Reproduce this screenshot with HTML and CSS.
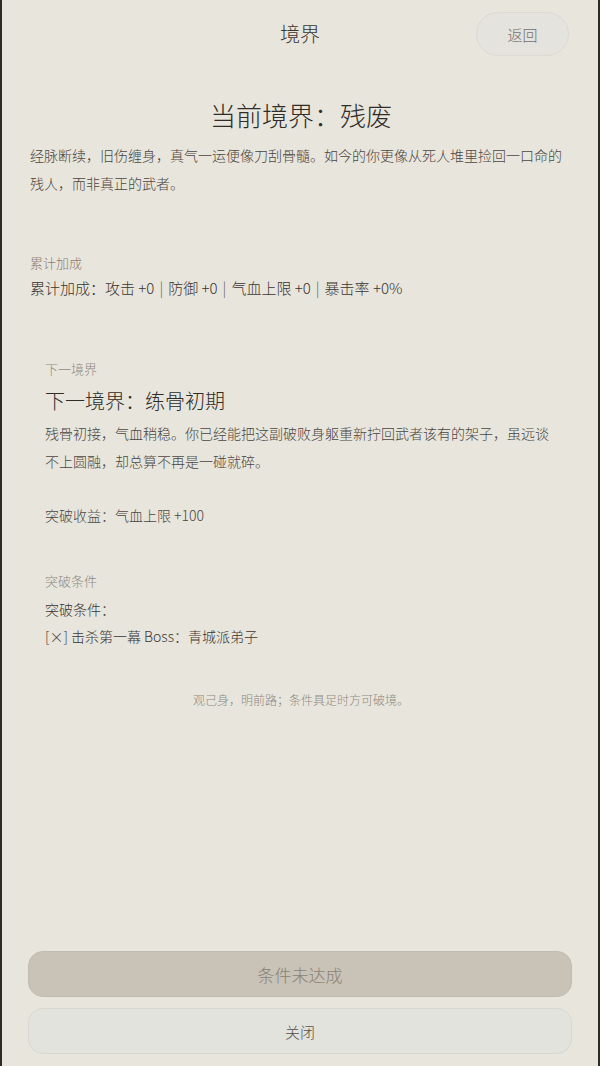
FILE: index.html
```html
<!DOCTYPE html>
<html lang="zh">
<head>
<meta charset="utf-8">
<title>境界</title>
<link rel="stylesheet" href="styles.css">
</head>
<body>
<div class="app">
  <header class="topbar">
    <div></div>
    <h1 class="page-title">境界</h1>
    <div class="topbar-right"><button class="back-btn">返回</button></div>
  </header>

  <main class="content">
    <h2 class="realm-title">当前境界：残废</h2>
    <p class="desc">经脉断续，旧伤缠身，真气一运便像刀刮骨髓。如今的你更像从死人堆里捡回一口命的残人，而非真正的武者。</p>

    <section class="bonus">
      <div class="label label-brown">累计加成</div>
      <div class="bonus-line">累计加成：攻击 +0<span class="sep">|</span>防御 +0<span class="sep">|</span>气血上限 +0<span class="sep">|</span>暴击率 +0%</div>
    </section>

    <section class="next">
      <div class="label">下一境界</div>
      <h3 class="next-title">下一境界：练骨初期</h3>
      <p class="desc">残骨初接，气血稍稳。你已经能把这副破败身躯重新拧回武者该有的架子，虽远谈不上圆融，却总算不再是一碰就碎。</p>
      <p class="benefit">突破收益：气血上限 +100</p>

      <div class="label cond-label">突破条件</div>
      <p class="cond">突破条件：</p>
      <p class="cond">[×] 击杀第一幕 Boss：青城派弟子</p>
    </section>

    <p class="note">观己身，明前路；条件具足时方可破境。</p>
  </main>

  <footer class="actions">
    <button class="btn btn-disabled">条件未达成</button>
    <button class="btn btn-close">关闭</button>
  </footer>
</div>
</body>
</html>
```

FILE: styles.css
```css
* { box-sizing: border-box; }
html, body {
  margin: 0;
  padding: 0;
  background: #2e2b26;
}
body {
  font-family: "Noto Sans CJK SC", "Noto Sans", sans-serif;
  font-weight: 300;
  color: #3a3631;
}
.app {
  margin: 0 2px;
  height: 1066px;
  background: #e8e5dc;
  display: flex;
  flex-direction: column;
}
.topbar {
  display: grid;
  grid-template-columns: 1fr auto 1fr;
  align-items: center;
  padding: 12px 29px 0 29px;
  height: 56px;
}
.page-title {
  margin: 0;
  font-size: 20px;
  font-weight: 300;
  line-height: 44px;
  color: #3a3631;
}
.topbar-right {
  display: flex;
  justify-content: flex-end;
}
.back-btn {
  width: 93px;
  height: 44px;
  border-radius: 22px;
  border: 1px solid #dcdad3;
  background: #e4e3dd;
  color: #75716b;
  font-family: inherit;
  font-weight: 300;
  font-size: 15px;
  padding: 0;
}
.content {
  padding: 0 26px 0 28px;
}
.realm-title {
  margin: 41px 0 0;
  text-align: center;
  font-size: 26px;
  font-weight: 300;
  line-height: 36px;
  color: #302d29;
}
.desc {
  margin: 8px 0 0;
  font-size: 14px;
  line-height: 28px;
  color: #4a4641;
}
.label {
  font-size: 13px;
  line-height: 18px;
  color: #8d8983;
}
.label-brown { color: #8e7b72; }
.bonus { margin-top: 57px; }
.bonus-line {
  margin-top: 4px;
  font-size: 15px;
  line-height: 24px;
  color: #3a3631;
}
.sep {
  display: inline-block;
  margin: 0 5px;
  color: #6a665f;
}
.next {
  margin: 60px 15px 0 15px;
}
.next-title {
  margin: 8px 0 0;
  font-size: 20px;
  font-weight: 300;
  line-height: 30px;
  color: #2f2c28;
}
.next .desc { margin-top: 3px; }
.benefit {
  margin: 26px 0 0;
  font-size: 14px;
  line-height: 28px;
  color: #4a4641;
}
.cond-label { margin-top: 43px; }
.cond {
  margin: 8px 0 0;
  font-size: 14px;
  line-height: 22px;
  color: #3a3631;
}
.cond + .cond { margin-top: 5px; }
.note {
  margin: 44px 0 0;
  text-align: center;
  font-size: 12px;
  line-height: 18px;
  color: #8d8983;
}
.actions {
  margin-top: auto;
  padding: 0 26px 12px 26px;
  display: flex;
  flex-direction: column;
  gap: 11px;
}
.btn {
  height: 46px;
  border-radius: 15px;
  font-family: inherit;
  font-weight: 300;
  padding: 0;
}
.btn-disabled {
  background: #c9c2b6;
  border: 1px solid #c2bbaf;
  color: #8a8378;
  font-size: 17px;
}
.btn-close {
  background: #e3e3de;
  border: 1px solid #d8d6cf;
  color: #55514b;
  font-size: 15px;
}
```
